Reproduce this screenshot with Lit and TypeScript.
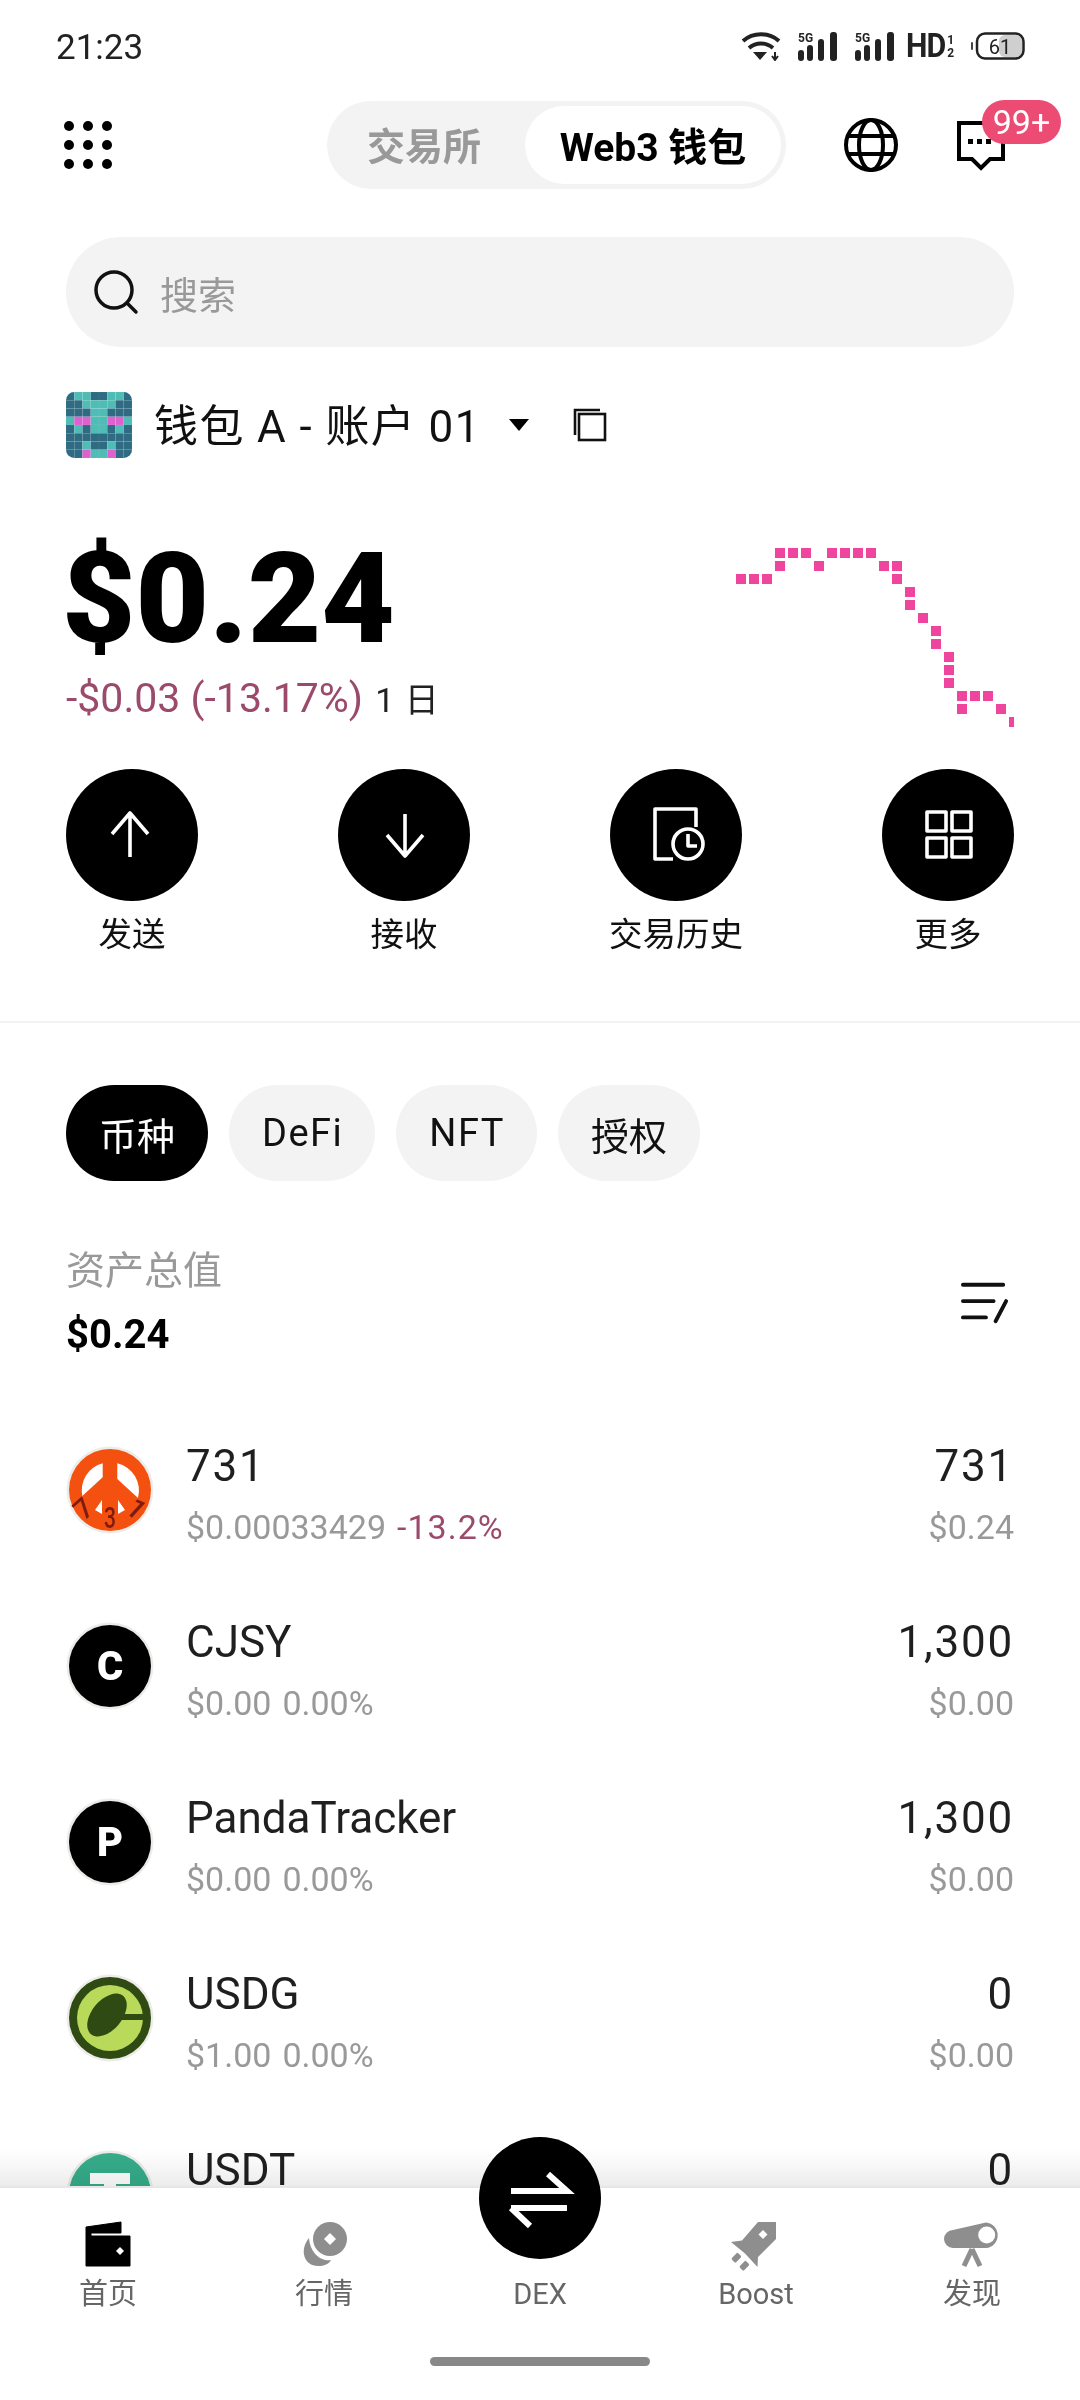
import { LitElement, html, css, svg } from "lit";
import { customElement } from "lit/decorators.js";

const chart: [number, number][] = [
  [3,0],[4,0],[5,0],[7,0],[8,0],[9,0],[10,0],
  [3,1],[6,1],[11,1],[12,1],
  [0,2],[1,2],[2,2],[12,2],
  [13,3],[13,4],[14,5],[15,6],[15,7],[16,8],[16,9],[16,10],
  [17,11],[18,11],[19,11],[17,12],[20,12],
];

const avatarRows = ["DTTDDTTD","DDTTTTDD","DDDTTDDD","TPPTTPPT","DTDTTDTD","DDDDDDDD","DDTDDTDD","DDPTTPDD"];
const avatarColor: Record<string, string> = { D: "#2f6b82", T: "#4fbdb5", P: "#dd62cf" };

const ring = svg`<circle cx="44" cy="44" r="43.5" fill="#ecece8"/>`;
const letter = (c: string) => svg`${ring}<circle cx="44" cy="44" r="41" fill="#000"/><text x="44" y="58" text-anchor="middle" font-family="Roboto, sans-serif" font-weight="900" font-size="40" fill="#fff">${c}</text>`;

const icon731 = svg`${ring}<circle cx="44" cy="44" r="41" fill="#f4500f"/>
  <path d="M36.7 17.3A28 28 0 0 0 16.3 50L36.7 31.3Z M51.3 17.3A28 28 0 0 1 72 52L51.3 33Z" fill="#fff"/>
  <path d="M29 64L36 54V68Z M59 64L52 54V68Z" fill="#fff"/>
  <g font-family="Roboto, sans-serif" fill="#7c1c12" font-weight="500">
    <text x="44" y="82" text-anchor="middle" font-size="29" textLength="12" lengthAdjust="spacingAndGlyphs">3</text>
    <text x="24" y="70" text-anchor="middle" font-size="28" transform="rotate(-42 24 70)">7</text>
    <text x="64" y="70" text-anchor="middle" font-size="28" transform="rotate(42 64 70)">1</text>
  </g>`;

const iconG = svg`${ring}<circle cx="44" cy="44" r="41" fill="#2f4a12"/><circle cx="44" cy="44" r="33" fill="#b9d95a"/>
  <ellipse cx="41" cy="41" rx="25" ry="15" transform="rotate(-50 41 41)" fill="#2f4a12"/>
  <path d="M40 40H78V46H52C50 52 44 54 40 54Z" fill="#2f4a12"/>`;

const iconT = svg`${ring}<circle cx="44" cy="44" r="41" fill="#35ad8a"/><path d="M24 23H64V34H50V70H38V34H24Z" fill="#fff"/>`;

const rows = [
  { name: "731", num: true, price: "$0.00033429", pct: "-13.2%", down: true, qty: "731", value: "$0.24", icon: icon731 },
  { name: "CJSY", num: false, price: "$0.00", pct: "0.00%", down: false, qty: "1,300", value: "$0.00", icon: letter("C") },
  { name: "PandaTracker", num: false, price: "$0.00", pct: "0.00%", down: false, qty: "1,300", value: "$0.00", icon: letter("P") },
  { name: "USDG", num: false, price: "$1.00", pct: "0.00%", down: false, qty: "0", value: "$0.00", icon: iconG },
  { name: "USDT", num: false, price: "$1.00", pct: "0.00%", down: false, qty: "0", value: "$0.00", icon: iconT },
];

const signal = html`<svg class="signal" width="40" height="30" viewBox="0 0 40 30">
  <text x="0" y="11" font-family="Roboto, sans-serif" font-weight="700" font-size="12" fill="#222">5G</text>
  <rect x="0" y="19" width="6" height="11" rx="3" fill="#222"/>
  <rect x="9" y="14" width="6" height="16" rx="3" fill="#222"/>
  <rect x="20" y="8" width="6" height="22" rx="3" fill="#222"/>
  <rect x="32" y="1" width="7" height="29" rx="3" fill="#222"/>
</svg>`;

const actions = [
  { label: "发送", icon: svg`<path d="M64 45V88M46 65L64 44L82 65"/>` },
  { label: "接收", icon: svg`<path d="M67 45V87M49 66L67 87L85 66"/>` },
  { label: "交易历史", icon: svg`<path d="M86 58V40H45V90H63"/><circle cx="78" cy="75" r="15"/><path d="M78 65V77H87"/>` },
  { label: "更多", icon: svg`<rect x="45" y="43" width="19" height="19"/><rect x="70" y="43" width="19" height="19"/><rect x="45" y="69" width="19" height="19"/><rect x="70" y="69" width="19" height="19"/>` },
];

const navItems = [
  { label: "首页", active: true, icon: svg`<path d="M8 14L43 9V20H13V23H52V53H8Z" fill="#000" stroke="#000" stroke-width="1" stroke-linejoin="round"/><path d="M42 34L46 38L42 42L38 38Z" fill="#fff"/>` },
  { label: "行情", active: false, icon: svg`<circle cx="36" cy="26" r="17" fill="#8e8e8e"/><path d="M36 20L42 26L36 32L30 26Z" fill="#fff"/><path d="M15 25C5 37 10 53 24 53C30 53 35 51 37 47C26 49 16 39 15 25Z" fill="#8e8e8e"/>` },
  { label: "DEX", active: false, icon: svg`` },
  { label: "Boost", active: false, icon: svg`<g transform="translate(-4 -2)"><path d="M36 11H54V28L36 46L35.500 56L23 42.500L9 31L20 29.500Z" fill="#8e8e8e"/><path d="M41 19L45.500 23.500L41 28L36.500 23.500Z" fill="#fff"/><rect x="10" y="44" width="9" height="6" rx="1.500" transform="rotate(-45 14 47)" fill="#8e8e8e"/><rect x="18" y="52" width="9" height="6" rx="1.500" transform="rotate(-45 22 55)" fill="#8e8e8e"/></g>` },
  { label: "发现", active: false, icon: svg`<path d="M11 17L44 9.500A12.800 12.800 0 0 1 44 35H11A9 9 0 0 1 11 17Z" fill="#8e8e8e"/><circle cx="44.700" cy="22" r="8.500" fill="#fff"/><path d="M30 36L22 53M30 36L38 53" stroke="#8e8e8e" stroke-width="5" fill="none"/>` },
];

@customElement("app-root")
export class AppRoot extends LitElement {
  static styles = css`
    :host {
      display: block; position: relative; width: 1080px; height: 2400px; overflow: hidden; background: #fff;
      font-family: Roboto, "Noto Sans CJK SC", sans-serif; color: #111;
    }
    .status { height: 92px; display: flex; align-items: center; padding: 0 55px 0 56px; }
    .time { font-size: 35px; color: #222; flex: 1; padding-top: 3px; }
    .status-icons { display: flex; align-items: center; }
    .signal { margin-left: 17px; }
    .hd { margin-left: 11px; display: flex; align-items: center; color: #222; font-weight: 700; font-size: 33px; line-height: 30px; letter-spacing: -1px; transform: scaleX(0.92); transform-origin: left center; width: 50px; }
    .frac { font-size: 13px; line-height: 13px; display: flex; flex-direction: column; margin-left: 2px; align-items: center; letter-spacing: 0; }
    .battery { margin-left: 15px; }

    .header { display: flex; align-items: center; height: 88px; margin-top: 9px; padding-left: 64px; }
    .dots { display: grid; grid-template-columns: repeat(3, 10px); gap: 9px; width: 48px; margin-right: 215px; }
    .dots i { width: 10px; height: 10px; border-radius: 50%; background: #000; }
    .pill { width: 459px; height: 88px; box-sizing: border-box; background: #f3f3f3; border-radius: 44px; padding: 5px; display: flex; align-items: center; }
    .pill .off { width: 184px; margin-right: 9px; text-align: center; font-size: 38px; font-weight: 700; color: #999; padding-bottom: 3px; }
    .pill .on { flex: 1; height: 78px; box-sizing: border-box; padding-bottom: 3px; background: #fff; border-radius: 39px; display: flex; align-items: center; justify-content: center; font-size: 39px; font-weight: 700; color: #000; white-space: nowrap; }
    .globe { margin-left: 58px; display: block; }
    .msg { position: relative; margin-left: 59px; width: 50px; height: 50px; margin-top: 2px; }
    .badge { position: absolute; left: 25px; top: -21px; width: 79px; height: 44px; border-radius: 22px; background: #ec4c74; color: #fff; font-size: 34px; line-height: 44px; text-align: center; }

    .search { margin: 48px 66px 0; height: 110px; border-radius: 55px; background: #f3f3f3; display: flex; align-items: center; padding-left: 27px; gap: 21px; font-size: 38px; color: #999; }

    .account { margin: 45px 66px 0; height: 66px; display: flex; align-items: center; font-size: 44px; color: #111; }
    .account-name { letter-spacing: 1.4px; margin-bottom: 5px; }
    .avatar { width: 66px; height: 66px; margin-right: 22px; display: block; }
    .caret { margin-left: 27px; }
    .copy { margin-left: 43px; }

    .hero { margin: 82px 66px 0; height: 190px; display: flex; justify-content: space-between; }
    .balance { font-size: 127px; line-height: 130px; font-weight: 900; color: #000; margin: -6px 0 0 -4px; height: 130px; }
    .change { font-size: 41px; line-height: 50px; color: #9b4a6c; white-space: nowrap; margin-top: 9px; }
    .change span { color: #222; font-size: 34px; margin-left: 2px; letter-spacing: 1px; }
    .chart { display: block; margin-top: 8px; }

    .actions { margin: 39px 66px 0; display: flex; justify-content: space-between; }
    .action { width: 132px; display: flex; flex-direction: column; align-items: center; }
    .circle { width: 132px; height: 132px; border-radius: 50%; background: #000; display: block; fill: none; stroke: #fff; stroke-width: 3.600; stroke-linejoin: round; }
    .action-label { margin-top: 12px; font-size: 33.500px; line-height: 44px; color: #111; white-space: nowrap; }

    .divider { height: 2px; background: #f2f2f2; margin-top: 64px; }

    .chips { display: flex; gap: 21px; margin: 62px 66px 0; }
    .chip { height: 96px; border-radius: 48px; background: #f3f3f3; display: flex; align-items: center; padding: 0 33px; font-size: 38px; color: #111; }
    .chip.lat { letter-spacing: 1.500px; padding: 0 32px 0 33px; }
    .chip.active { background: #000; color: #fff; }

    .total { margin: 65px 71px 0 66px; display: flex; justify-content: space-between; align-items: center; }
    .total-label { font-size: 39px; line-height: 50px; color: #999; }
    .total-value { font-size: 40px; line-height: 50px; font-weight: 700; color: #000; margin-top: 14px; }

    .list { margin: 42px 66px 0; }
    .row { height: 176px; display: flex; align-items: center; }
    .token { width: 88px; height: 88px; margin-right: 32px; flex: none; display: block; }
    .row-body { flex: 1; display: flex; justify-content: space-between; padding-top: 6px; }
    .cell { display: flex; flex-direction: column; }
    .cell.right { align-items: flex-end; }
    .name { font-size: 44px; line-height: 56px; color: #1f1f1f; }
    .name.num { letter-spacing: 1.800px; }
    .sub { font-size: 34px; line-height: 44px; color: #999; margin-top: 11px; white-space: nowrap; }
    .sub .down { color: #9b4a6c; margin-left: 11px; letter-spacing: 1px; }
    .sub .flat { margin-left: 11px; }

    .fade { position: absolute; left: 0; right: 0; top: 2150px; height: 36px; background: linear-gradient(#fff, #ececec); mix-blend-mode: multiply; }
    .nav { position: absolute; left: 0; right: 0; bottom: 0; height: 214px; background: #fff; border-top: 2px solid #e6e6e6; box-sizing: border-box; display: grid; grid-template-columns: repeat(5, 216px); }
    .tab { display: flex; flex-direction: column; align-items: center; padding-top: 25px; }
    .tab svg { display: block; }
    .tab-label { font-size: 29px; line-height: 40px; color: #666; margin-top: 1px; }
    .dex { position: absolute; left: 479px; top: -51px; display: block; }
    .home { position: absolute; left: 430px; bottom: 34px; width: 220px; height: 9px; border-radius: 5px; background: #888; }
  `;

  render() {
    return html`
      <div class="status">
        <div class="time">21:23</div>
        <div class="status-icons">
          <svg width="40" height="30" viewBox="0 0 40 30" fill="none" stroke="#222" stroke-width="4">
            <path d="M2 10C12 1 28 1 38 10"/><path d="M8 17C15 11 25 11 32 17"/>
            <path d="M12 21H26L19 29Z" fill="#222" stroke="none"/>
            <path d="M34 21V29M31 25L34 29L37 25" stroke-width="2"/>
          </svg>
          ${signal}${signal}
          <div class="hd">HD<span class="frac"><span>1</span><span>2</span></span></div>
          <svg class="battery" width="54" height="28" viewBox="0 0 54 28">
            <rect x="0" y="10" width="2" height="8" rx="1" fill="#444"/>
            <rect x="28" y="3" width="23" height="22" rx="6" fill="#cfcfcf"/>
            <rect x="6" y="1.500" width="46.500" height="25" rx="8" fill="none" stroke="#222" stroke-width="2.500"/>
            <text x="29" y="22" text-anchor="middle" font-family="Roboto, sans-serif" font-size="20" fill="#222">61</text>
          </svg>
        </div>
      </div>

      <div class="header">
        <div class="dots">${Array.from({ length: 9 }, () => html`<i></i>`)}</div>
        <div class="pill"><div class="off">交易所</div><div class="on">Web3 钱包</div></div>
        <svg class="globe" width="54" height="54" viewBox="0 0 54 54" fill="none" stroke="#000" stroke-width="4">
          <circle cx="27" cy="27" r="25"/><ellipse cx="27" cy="27" rx="12" ry="25"/><path d="M4 18H50M4 36H50"/>
        </svg>
        <div class="msg">
          <svg width="50" height="50" viewBox="0 0 50 50" fill="none">
            <path d="M2 2H46V38H33L24 47L15 38H2Z" stroke="#000" stroke-width="4"/>
            <rect x="11" y="18" width="5" height="5" fill="#000"/><rect x="20" y="18" width="5" height="5" fill="#000"/><rect x="29" y="18" width="5" height="5" fill="#000"/>
          </svg>
          <div class="badge">99+</div>
        </div>
      </div>

      <div class="search">
        <svg width="46" height="46" viewBox="0 0 46 46" fill="none" stroke="#111" stroke-width="3.500">
          <circle cx="21" cy="21" r="18"/><path d="M34 34L43 43" stroke-linecap="round"/>
        </svg>
        <span>搜索</span>
      </div>

      <div class="account">
        <svg class="avatar" viewBox="0 0 80 80">
          <defs><clipPath id="av"><rect width="80" height="80" rx="10"/></clipPath></defs>
          <g clip-path="url(#av)">
            ${avatarRows.map((r, y) => [...r].map((c, x) => svg`<rect x="${x * 10}" y="${y * 10}" width="10" height="10" fill="${avatarColor[c]}" stroke="rgba(255,255,255,0.12)" stroke-width="0.500"/>`))}
          </g>
        </svg>
        <span class="account-name">钱包 A - 账户 01</span>
        <svg class="caret" width="22" height="14" viewBox="0 0 22 14"><path d="M1 1H21L11 13Z" fill="#000"/></svg>
        <svg class="copy" width="34" height="34" viewBox="0 0 34 34" fill="none" stroke="#111" stroke-width="2.600">
          <rect x="6" y="6" width="26" height="26"/><path d="M2 27V2H27"/>
        </svg>
      </div>

      <div class="hero">
        <div>
          <div class="balance">$0.24</div>
          <div class="change">-$0.03 (-13.17%) <span>1 日</span></div>
        </div>
        <svg class="chart" width="278" height="182" viewBox="0 0 278 182" fill="#f0459f">
          ${chart.map(([c, r]) => svg`<rect x="${c * 13}" y="${r * 13}" width="10" height="10"/>`)}
          <rect x="273" y="169" width="5" height="10"/>
        </svg>
      </div>

      <div class="actions">
        ${actions.map((a) => html`<div class="action"><svg class="circle" viewBox="0 0 132 132">${a.icon}</svg><div class="action-label">${a.label}</div></div>`)}
      </div>

      <div class="divider"></div>

      <div class="chips">
        <div class="chip active">币种</div><div class="chip lat">DeFi</div><div class="chip lat">NFT</div><div class="chip">授权</div>
      </div>

      <div class="total">
        <div><div class="total-label">资产总值</div><div class="total-value">$0.24</div></div>
        <svg width="48" height="44" viewBox="0 0 50 44" fill="none" stroke="#111" stroke-width="4" stroke-linecap="round">
          <path d="M2 3H44M2 20H34M2 37H26M47 20L36 41"/>
        </svg>
      </div>

      <div class="list">
        ${rows.map((r) => html`<div class="row">
          <svg class="token" viewBox="0 0 88 88">${r.icon}</svg>
          <div class="row-body">
            <div class="cell"><div class="name ${r.num ? "num" : ""}">${r.name}</div><div class="sub">${r.price}<span class="${r.down ? "down" : "flat"}">${r.pct}</span></div></div>
            <div class="cell right"><div class="name num">${r.qty}</div><div class="sub">${r.value}</div></div>
          </div>
        </div>`)}
      </div>

      <div class="fade"></div>
      <div class="nav">
        ${navItems.map((n) => html`<div class="tab">
          <svg width="60" height="60" viewBox="0 0 60 60">${n.icon}</svg>
          <div class="tab-label">${n.label}</div>
        </div>`)}
        <svg class="dex" width="122" height="122" viewBox="0 0 122 122" fill="none">
          <circle cx="61" cy="61" r="61" fill="#000"/>
          <path d="M32 54H88L69 37M32 71H88M32 71L51 89" stroke="#fff" stroke-width="6"/>
        </svg>
        <div class="home"></div>
      </div>
    `;
  }
}
